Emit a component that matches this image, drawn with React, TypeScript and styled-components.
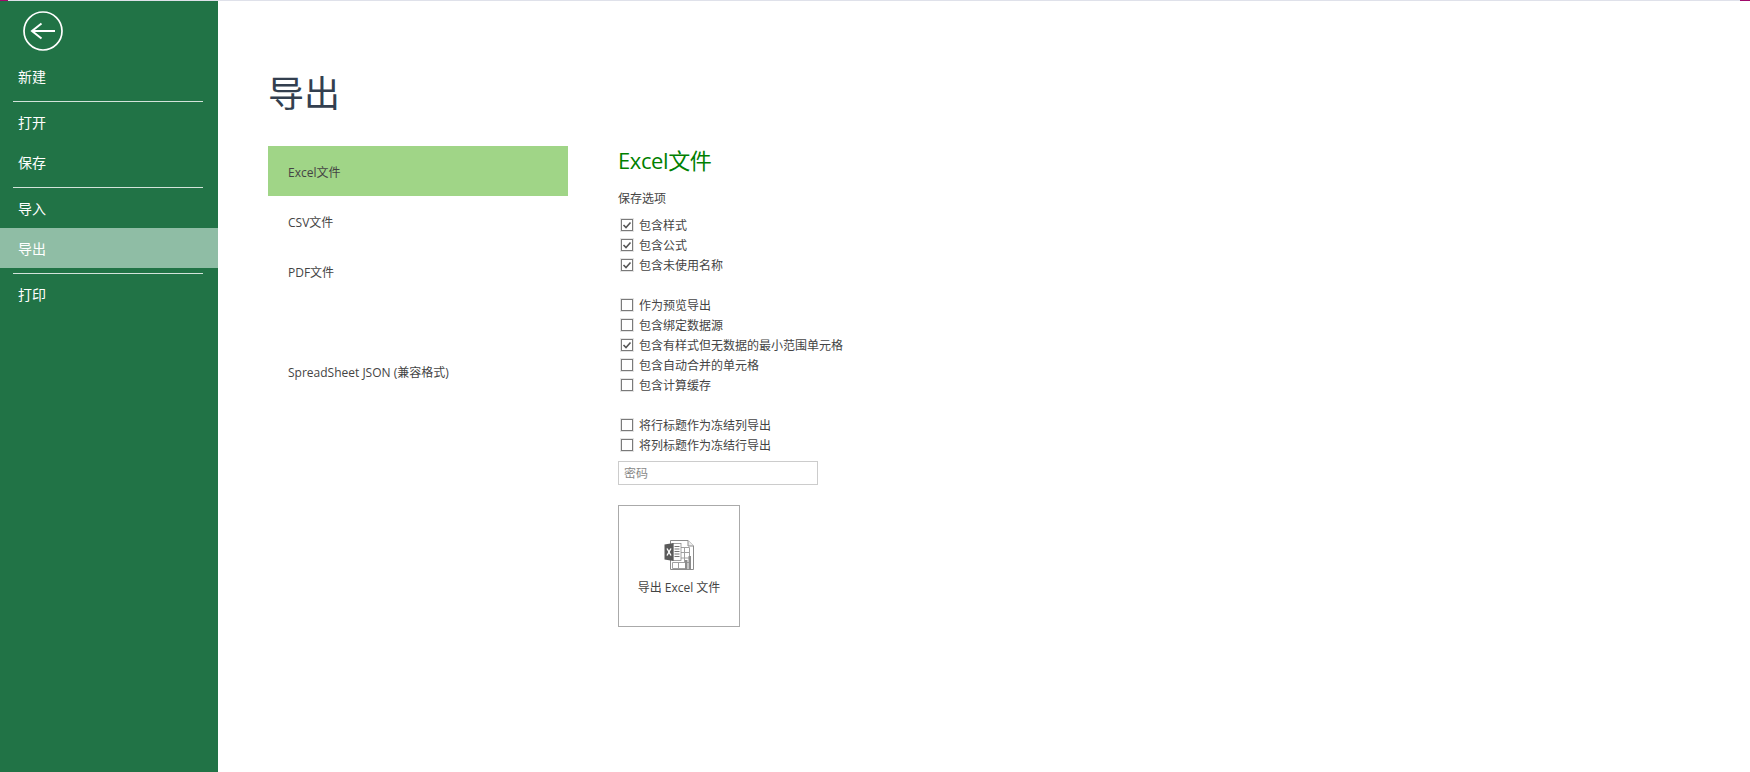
import React from "react";
import styled, { createGlobalStyle } from "styled-components";

const Global = createGlobalStyle`
  html, body { margin: 0; padding: 0; height: 100%; background: #fff; overflow: hidden; }
  #root { height: 100%; }
  * { box-sizing: border-box; }
  body { font-family: "Open Sans", "Noto Sans CJK SC", sans-serif; font-size: 12px; color: #444; }
`;

const Page = styled.div`
  width: 1750px;
  height: 772px;
  display: flex;
  flex-direction: column;
`;

const TopStrip = styled.div`
  height: 1px;
  flex: none;
  display: flex;
  justify-content: space-between;
  background: #dfe1ea;
`;

const StripEnd = styled.span<{ $w: number }>`
  width: ${(p) => p.$w}px;
  background: #a00a6a;
`;

const Body = styled.div`
  flex: 1;
  display: flex;
  min-height: 0;
`;

const Side = styled.nav`
  width: 218px;
  flex: none;
  background: #217346;
  display: flex;
  flex-direction: column;
`;

const Back = styled.div`
  height: 55px;
  padding: 10px 0 0 23px;
  svg { display: block; }
`;

const NavItem = styled.div<{ $active?: boolean }>`
  height: 40px;
  padding-left: 18px;
  display: flex;
  align-items: center;
  color: #fff;
  font-size: 14px;
  font-weight: 400;
  background: ${(p) => (p.$active ? "#8fbda5" : "transparent")};
`;

const Rule = styled.div`
  height: 1px;
  margin: 5px 15px 0 13px;
  background: #d3e3da;
`;

const Main = styled.main`
  flex: 1;
  padding: 0 0 0 50px;
  min-width: 0;
`;

const Title = styled.h1`
  margin: 0;
  padding-top: 69px;
  height: 145px;
  font-size: 36px;
  line-height: 47px;
  font-weight: 400;
  color: #333f4f;
`;

const Columns = styled.div`
  display: flex;
  gap: 50px;
`;

const TypeList = styled.ul`
  list-style: none;
  margin: 0;
  padding: 0;
  width: 300px;
`;

const TypeItem = styled.li<{ $active?: boolean }>`
  height: 50px;
  padding: 1px 0 0 20px;
  display: flex;
  align-items: center;
  font-size: 12px;
  color: #444;
  background: ${(p) => (p.$active ? "#a0d587" : "transparent")};
`;

const Detail = styled.section`
  display: flex;
  flex-direction: column;
`;

const DetailTitle = styled.h2`
  margin: 0;
  height: 30px;
  font-size: 22px;
  line-height: 28px;
  letter-spacing: -0.4px;
  font-weight: 400;
  color: #008000;
`;

const GroupLabel = styled.div`
  margin-top: 13px;
  height: 20px;
  line-height: 20px;
  font-size: 12px;
  color: #444;
`;

const Group = styled.div`
  display: flex;
  flex-direction: column;
  margin-top: 6px;
  & + & { margin-top: 20px; }
`;

const CheckRow = styled.label`
  height: 20px;
  display: flex;
  align-items: center;
  padding-left: 3px;
  gap: 6px;
  font-size: 12px;
  color: #444;
`;

const CheckBox = styled.span`
  width: 12px;
  height: 12px;
  flex: none;
  border: 1px solid #7a7a7a;
  outline: 1px solid #e4e4e4;
  background: #fff;
  display: flex;
  align-items: center;
  justify-content: center;
  svg { display: block; }
`;

const Password = styled.input`
  display: block;
  width: 200px;
  height: 24px;
  margin-top: 6px;
  padding: 0 5px;
  border: 1px solid #ccc;
  outline: none;
  background: #fff;
  font: 12px "Open Sans", "Noto Sans CJK SC", sans-serif;
  &::placeholder { color: #888; opacity: 1; }
`;

const ExportButton = styled.button`
  margin-top: 20px;
  width: 122px;
  height: 122px;
  padding: 34px 0 0;
  background: #fff;
  border: 1px solid #aaa;
  display: flex;
  flex-direction: column;
  align-items: center;
  gap: 8px;
  font: 12px "Open Sans", "Noto Sans CJK SC", sans-serif;
  color: #444;
  svg { display: block; }
`;

const Check = ({ on, label }: { on?: boolean; label: string }) => (
  <CheckRow>
    <CheckBox>
      {on && (
        <svg width="10" height="10" viewBox="0 0 10 10">
          <path d="M1.5 5 L4 7.5 L8.5 2.5" fill="none" stroke="#555" strokeWidth="1.6" />
        </svg>
      )}
    </CheckBox>
    {label}
  </CheckRow>
);

const ExcelIcon = () => (
  <svg width="30" height="30" viewBox="0 0 30 30">
    <path d="M6.5 0.5H24L29.5 6V29.5H6.5Z" fill="#fff" stroke="#8c8c8c" />
    <path d="M24 0.5V6H29.5" fill="#eee" stroke="#8c8c8c" />
    <path d="M16 7.5H25.5V24M16 12.5H25.5M16 18H25.5M8.5 22.5H25.5M8.5 22.5V28.5H22M14.5 22.5V28.5M20.5 7.5V22.5" fill="none" stroke="#a0a0a0" />
    <rect x="21" y="20" width="2.5" height="9" fill="#8c8c8c" />
    <rect x="24.5" y="16" width="2.5" height="13" fill="#8c8c8c" />
    <rect x="9" y="3.5" width="8" height="17" fill="#fff" stroke="#8c8c8c" strokeWidth="0.8" />
    <path d="M10.5 6.5H15.5M10.5 9H15.5M10.5 11.5H15.5M10.5 14H15.5M10.5 16.5H15.5" stroke="#777" />
    <path d="M0.5 4.5L9.5 3V21L0.5 19.5Z" fill="#5a5a5a" />
    <path d="M3 8.5L7 15.5M7 8.5L3 15.5" stroke="#fff" strokeWidth="1.4" fill="none" />
  </svg>
);

export default function App() {
  return (
    <Page>
      <Global />
      <TopStrip>
        <StripEnd $w={8} />
        <StripEnd $w={10} />
      </TopStrip>
      <Body>
        <Side>
          <Back>
            <svg width="40" height="40" viewBox="0 0 40 40">
              <circle cx="20" cy="20" r="19" fill="none" stroke="#fff" strokeWidth="1.7" />
              <path d="M9 20H32M18.5 12.5L9 20L18.5 27.5" fill="none" stroke="#fff" strokeWidth="2" />
            </svg>
          </Back>
          <NavItem>新建</NavItem>
          <Rule />
          <NavItem>打开</NavItem>
          <NavItem>保存</NavItem>
          <Rule />
          <NavItem>导入</NavItem>
          <NavItem $active>导出</NavItem>
          <Rule />
          <NavItem>打印</NavItem>
        </Side>
        <Main>
          <Title>导出</Title>
          <Columns>
            <TypeList>
              <TypeItem $active>Excel文件</TypeItem>
              <TypeItem>CSV文件</TypeItem>
              <TypeItem>PDF文件</TypeItem>
              <TypeItem />
              <TypeItem>SpreadSheet JSON (兼容格式)</TypeItem>
            </TypeList>
            <Detail>
              <DetailTitle>Excel文件</DetailTitle>
              <GroupLabel>保存选项</GroupLabel>
              <Group>
                <Check on label="包含样式" />
                <Check on label="包含公式" />
                <Check on label="包含未使用名称" />
              </Group>
              <Group>
                <Check label="作为预览导出" />
                <Check label="包含绑定数据源" />
                <Check on label="包含有样式但无数据的最小范围单元格" />
                <Check label="包含自动合并的单元格" />
                <Check label="包含计算缓存" />
              </Group>
              <Group>
                <Check label="将行标题作为冻结列导出" />
                <Check label="将列标题作为冻结行导出" />
              </Group>
              <Password placeholder="密码" />
              <ExportButton>
                <ExcelIcon />
                导出 Excel 文件
              </ExportButton>
            </Detail>
          </Columns>
        </Main>
      </Body>
    </Page>
  );
}
